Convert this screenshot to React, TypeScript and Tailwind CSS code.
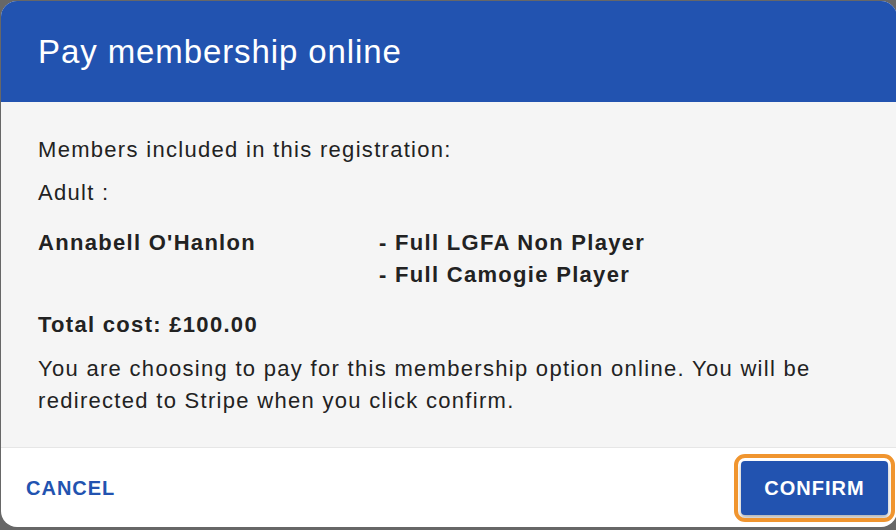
export default function App() {
  const font = { fontFamily: '"Liberation Sans", Arial, sans-serif' };
  return (
    <div className="w-[896px] h-[530px] bg-[#676767] pt-px pl-px overflow-hidden" style={font}>
      <div className="w-[896px] h-[526px] rounded-[16px] overflow-hidden flex flex-col bg-white">
        <div className="h-[101px] shrink-0 bg-[#2253b0] flex items-center px-[37px]">
          <h1 className="text-white text-[33px] tracking-[0.9px] leading-none">Pay membership online</h1>
        </div>

        <div className="h-[346px] shrink-0 bg-[#f5f5f5] px-[37px] pt-[32px] text-[#222] text-[22px] leading-[32px] tracking-[1.3px] border-b border-[#e6e6e6]">
          <p>Members included in this registration:</p>
          <p className="mt-[11px]">Adult :</p>
          <div className="mt-[18px] flex font-bold">
            <div className="w-[341px]">Annabell O'Hanlon</div>
            <div>
              <div>- Full LGFA Non Player</div>
              <div>- Full Camogie Player</div>
            </div>
          </div>
          <p className="mt-[18px] font-bold">Total cost: £100.00</p>
          <p className="mt-[12px]">
            You are choosing to pay for this membership option online. You will be redirected to Stripe when you click confirm.
          </p>
        </div>

        <div className="flex-1 flex items-center justify-between pl-[25px] pr-[9px]">
          <button className="text-[#2253b0] font-bold text-[20px] tracking-[1px] pt-px">CANCEL</button>
          <button className="w-[147px] h-[54px] mt-[1px] rounded-[4px] bg-[#2253b0] text-white font-bold text-[20px] tracking-[1px] shadow-[0_3px_4px_rgba(0,0,0,0.3)] outline-4 outline-offset-[3px] outline-[#f0952f]">
            CONFIRM
          </button>
        </div>
      </div>
    </div>
  );
}
